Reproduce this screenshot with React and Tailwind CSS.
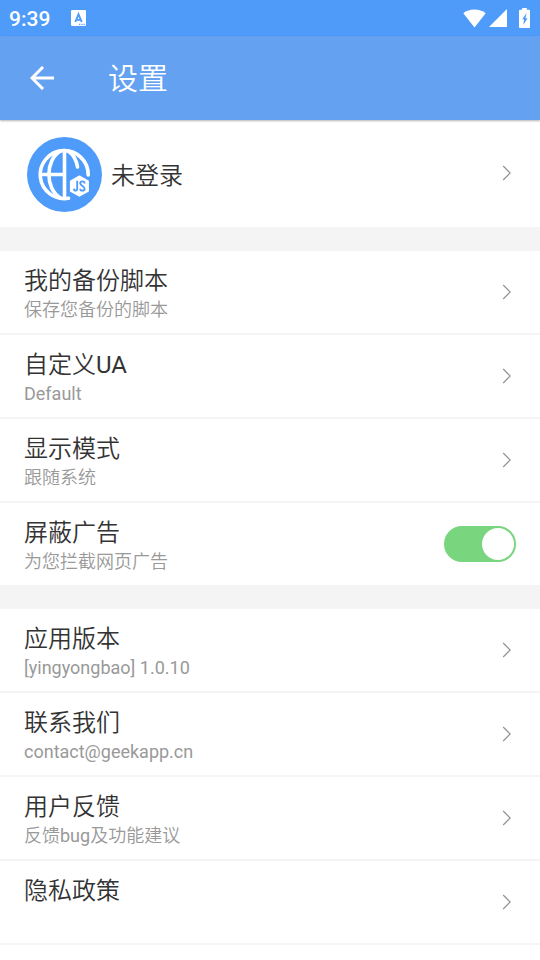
import React, { useState } from 'react'

const general = [
  { title: '我的备份脚本', sub: '保存您备份的脚本' },
  { title: '自定义UA', sub: 'Default' },
  { title: '显示模式', sub: '跟随系统' },
]

const about = [
  { title: '应用版本', sub: '[yingyongbao] 1.0.10' },
  { title: '联系我们', sub: 'contact@geekapp.cn' },
  { title: '用户反馈', sub: '反馈bug及功能建议' },
  { title: '隐私政策', sub: '' },
]

function Chevron() {
  return (
    <svg className="w-[10px] h-4 mr-1 shrink-0" viewBox="0 0 10 16" fill="none" stroke="#8f8f8f" strokeWidth="1.1">
      <path d="M1.2 1l7 7-7 7" />
    </svg>
  )
}

function StatusBar() {
  return (
    <div className="h-9 bg-[#4e9bfa] flex items-center justify-between pl-[9px] pr-[10px] text-white">
      <div className="flex items-center gap-[21px]">
        <span className="text-[21px] leading-9 font-medium pt-px">9:39</span>
        <svg className="w-[15px] h-4" viewBox="0 0 15 16">
          <rect width="15" height="16" rx="1.2" fill="#fff" />
          <path d="M4.3 12L7.5 4.3l3.2 7.7M5.3 9.9h4.4" fill="none" stroke="#4e9bfa" strokeWidth="1.9" />
          <path d="M8 14.4h1.2M10.3 14.4h1.2M12.6 14.4h1.2" stroke="#4e9bfa" strokeWidth="1.1" />
        </svg>
      </div>
      <div className="flex items-center">
        <svg className="w-[23px] h-[19px] mr-[3px]" viewBox="0 0 23 19" fill="#fff">
          <path d="M.3 4.2C3.4 1.7 7.1.5 11.5.5s8.1 1.2 11.2 3.7L11.5 18.5z" />
        </svg>
        <svg className="w-[18px] h-[18px] mr-3" viewBox="0 0 18 18" fill="#fff">
          <path d="M18 0v18H0z" />
        </svg>
        <svg className="w-[11px] h-5" viewBox="0 0 11 20">
          <path d="M3.2 0h4.6v1.8H10a1 1 0 0 1 1 1V19a1 1 0 0 1-1 1H1a1 1 0 0 1-1-1V2.8a1 1 0 0 1 1-1h2.2z" fill="#fff" />
          <path d="M7.6 5L3.2 11.2h1.9L4.3 17l4.2-6.8H6.4z" fill="#4e9bfa" />
        </svg>
      </div>
    </div>
  )
}

function Logo() {
  return (
    <svg className="w-[75px] h-[75px]" viewBox="0 0 75 75" fill="none">
      <circle cx="37.5" cy="37.5" r="37.5" fill="#4e9bfa" />
      <g stroke="#fff" strokeWidth="3.6" strokeLinecap="round">
        <path d="M61.2 38A24 24 0 1 0 41.5 61.2" />
        <path d="M37.5 13.5v48M13.5 37.5h24" />
        <path d="M33.5 14C18 23 18 52 33.5 61" />
        <path d="M42 14.5C46.5 18 49.5 23.500 50.500 30" />
      </g>
      <path d="M52.4 39.300l8.700 4.900v9.800l-8.700 4.900-8.700-4.900v-9.800z" fill="#fff" stroke="#fff" strokeWidth="1.6" strokeLinejoin="round" />
      <path d="M50.200 43.800v8q0 1.800-1.600 1.800t-1.700-2" stroke="#4e9bfa" strokeWidth="1.8" />
      <path d="M57.600 46.400q0-2-2.200-2t-2.200 1.900c0 2.500 4.400 2.900 4.400 5.400q0 2-2.200 2t-2.200-2" stroke="#4e9bfa" strokeWidth="1.8" />
    </svg>
  )
}

function Row({ title, sub, children }) {
  return (
    <div className="h-[82px] bg-white px-6 flex items-center justify-between">
      <div className="h-[58px]">
        <div className="h-9 text-2xl leading-9 text-[#333]">{title}</div>
        <div className="h-[22px] text-lg leading-[22px] text-[#999]">{sub}</div>
      </div>
      {children || <Chevron />}
    </div>
  )
}

export default function App() {
  const [block, setBlock] = useState(true)

  return (
    <div className="w-full h-[960px] overflow-hidden bg-white font-[Roboto,'Noto_Sans_CJK_SC_DemiLight','Noto_Sans_CJK_SC',sans-serif]">
      <StatusBar />
      <header className="relative h-[84px] bg-[#64a1f1] flex items-center text-white shadow-[0_1px_2px_rgba(0,0,0,0.3)]">
        <svg className="w-6 h-6 ml-[30px]" viewBox="0 0 24 24" fill="none" stroke="#fff" strokeWidth="3">
          <path d="M24 12H2M13 1L2 12l11 11" />
        </svg>
        <h1 className="ml-[54px] pt-[2px] text-[30px] leading-[44px] font-[350]">设置</h1>
      </header>

      <div className="h-[107px] pt-[2px] bg-white pl-[27px] pr-6 flex items-center justify-between">
        <div className="flex items-center gap-[9px]">
          <Logo />
          <span className="pt-[2px] text-2xl font-[350] text-[#333]">未登录</span>
        </div>
        <div className="pb-1">
          <Chevron />
        </div>
      </div>

      <div className="h-6 bg-[#f4f4f4]" />

      <div className="flex flex-col gap-[2px] bg-[#f4f4f4]">
        {general.map(r => <Row key={r.title} {...r} />)}
        <Row title="屏蔽广告" sub="为您拦截网页广告">
          <button
            role="switch"
            aria-checked={block}
            aria-label="屏蔽广告"
            onClick={() => setBlock(!block)}
            className={`w-[72px] h-9 rounded-full p-[2px] flex ${block ? 'bg-[#79d67f] justify-end' : 'bg-[#ddd] justify-start'}`}
          >
            <span className="w-8 h-8 rounded-full bg-white" />
          </button>
        </Row>
      </div>

      <div className="h-6 bg-[#f4f4f4]" />

      <div className="flex flex-col gap-[2px] pb-[2px] bg-[#f4f4f4]">
        {about.map(r => <Row key={r.title} {...r} />)}
      </div>
    </div>
  )
}
